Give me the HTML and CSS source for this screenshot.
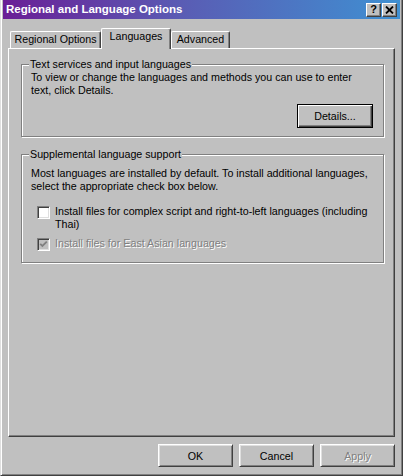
FILE: index.html
```html
<!DOCTYPE html>
<html lang="en">
<head>
    <meta charset="UTF-8">
    <title>Regional and Language Options</title>
    <link rel="stylesheet" href="styles.css">
</head>
<body>
    <div class="window">
        <div class="titlebar">
            <span class="title">Regional and Language Options</span>
            <div class="title-buttons">
                <span class="title-btn help">?</span>
                <span class="title-btn close">
                    <svg width="9" height="8" viewBox="0 0 9 8"><path d="M1 0.5 L8 7.5 M8 0.5 L1 7.5" stroke="#000" stroke-width="1.8"/></svg>
                </span>
            </div>
        </div>

        <div class="tabs">
            <div class="tab tab-regional">Regional Options</div>
            <div class="tab tab-active">Languages</div>
            <div class="tab tab-advanced">Advanced</div>
        </div>

        <div class="panel">
            <fieldset class="group group-services">
                <legend>Text services and input languages</legend>
                <p>To view or change the languages and methods you can use to enter<br>text, click Details.</p>
                <div class="group-actions">
                    <button class="btn btn-default">Details...</button>
                </div>
            </fieldset>

            <fieldset class="group group-supplemental">
                <legend>Supplemental language support</legend>
                <p>Most languages are installed by default. To install additional languages,<br>select the appropriate check box below.</p>
                <label class="check check-complex">
                    <span class="box"></span>
                    <span class="check-text">Install files for complex script and right-to-left languages (including<br>Thai)</span>
                </label>
                <label class="check check-asian disabled">
                    <span class="box">
                        <svg width="9" height="9" viewBox="0 0 9 9"><polyline points="1.2,3.8 3.4,6 7.8,1.6" fill="none" stroke="#808080" stroke-width="1.8"/></svg>
                    </span>
                    <span class="check-text">Install files for East Asian languages</span>
                </label>
            </fieldset>
        </div>

        <div class="actions">
            <button class="btn">OK</button>
            <button class="btn">Cancel</button>
            <button class="btn disabled">Apply</button>
        </div>
    </div>
</body>
</html>
```

FILE: styles.css
```css
* {
    box-sizing: border-box;
}
body {
    margin: 0;
    background: #c0c0c0;
    font-family: "Liberation Sans", Arial, sans-serif;
    font-size: 10.7px;
    line-height: 13px;
    color: #000;
}
.window {
    width: 403px;
    height: 476px;
    background: #c0c0c0;
    border-left: 1px solid #dfdfdf;
    border-right: 1px solid #404040;
    border-bottom: 1px solid #404040;
    box-shadow: inset 1px 0 #fff, inset -1px -1px #808080;
    padding: 0 2px 2px;
}

/* title bar */
.titlebar {
    height: 19px;
    display: flex;
    align-items: center;
    justify-content: space-between;
    padding: 0 3px;
    background: linear-gradient(to right, #6a1e96, #5a5cb4 45%, #3f90d2);
    color: #fff;
}
.title {
    font-weight: bold;
    font-size: 11.5px;
}
.title-buttons {
    display: flex;
    gap: 1px;
}
.title-btn {
    width: 15px;
    height: 14px;
    display: flex;
    align-items: center;
    justify-content: center;
    background: #c0c0c0;
    border: 1px solid;
    border-color: #fff #404040 #404040 #fff;
    box-shadow: inset -1px -1px #808080;
    color: #000;
    font-weight: bold;
    font-size: 11px;
}

/* tabs */
.tabs {
    display: flex;
    align-items: flex-end;
    height: 20px;
    margin-top: 9px;
    padding-left: 7px;
}
.tab {
    height: 17px;
    text-align: center;
    padding-top: 1px;
    border: 1px solid;
    border-bottom: none;
    border-color: #fff #404040 #fff #fff;
    border-radius: 2px 2px 0 0;
    box-shadow: inset -1px 0 #808080;
}
.tab-regional {
    width: 91px;
}
.tab-active {
    width: 70px;
    height: 21px;
    margin-bottom: -1px;
    position: relative;
    z-index: 1;
    background: #c0c0c0;
}
.tab-advanced {
    width: 59px;
}

/* panel */
.panel {
    width: 387px;
    height: 389px;
    margin-left: 5px;
    border: 1px solid;
    border-color: #fff #404040 #404040 #fff;
    box-shadow: inset -1px -1px #808080;
    padding: 0 10px 0 12px;
}
.group {
    margin: 0;
    border: 1px solid #808080;
    box-shadow: inset 1px 1px #fff, 1px 1px #fff;
    padding: 0 10px 0 9px;
}
.group legend {
    padding: 0 1px;
    margin-left: -2px;
    background: #c0c0c0;
}
.group p {
    margin: 0;
}
.group-services {
    margin-top: 9px;
    padding-bottom: 8px;
}
.group-actions {
    display: flex;
    justify-content: flex-end;
    margin-top: 7px;
}
.group-supplemental {
    margin-top: 11px;
    padding-top: 6px;
    padding-bottom: 11px;
}

/* check boxes */
.check {
    display: flex;
    align-items: flex-start;
    gap: 5px;
    padding-left: 6px;
}
.check-complex {
    margin-top: 12px;
}
.check-asian {
    margin-top: 6px;
}
.box {
    width: 13px;
    height: 13px;
    flex-shrink: 0;
    margin-top: 1px;
    display: flex;
    align-items: center;
    justify-content: center;
    background: #fff;
    border: 1px solid;
    border-color: #808080 #fff #fff #808080;
    box-shadow: inset 1px 1px #404040, inset -1px -1px #dfdfdf;
}
.check.disabled .box {
    background: #c0c0c0;
}
.check.disabled .check-text {
    color: #808080;
    text-shadow: 1px 1px #fff;
}

/* buttons */
.btn {
    width: 75px;
    height: 23px;
    padding: 0;
    background: #c0c0c0;
    font-family: inherit;
    font-size: inherit;
    color: #000;
    border: 1px solid;
    border-color: #fff #404040 #404040 #fff;
    box-shadow: inset 1px 1px #dfdfdf, inset -1px -1px #808080;
}
.btn-default {
    width: 76px;
    height: 24px;
    border-color: #000;
    box-shadow: inset 1px 1px #fff, inset -1px -1px #404040, inset -2px -2px #808080;
}
.btn.disabled {
    color: #808080;
    text-shadow: 1px 1px #fff;
}
.actions {
    display: flex;
    justify-content: flex-end;
    gap: 6px;
    margin-top: 7px;
    padding-right: 5px;
}
```
